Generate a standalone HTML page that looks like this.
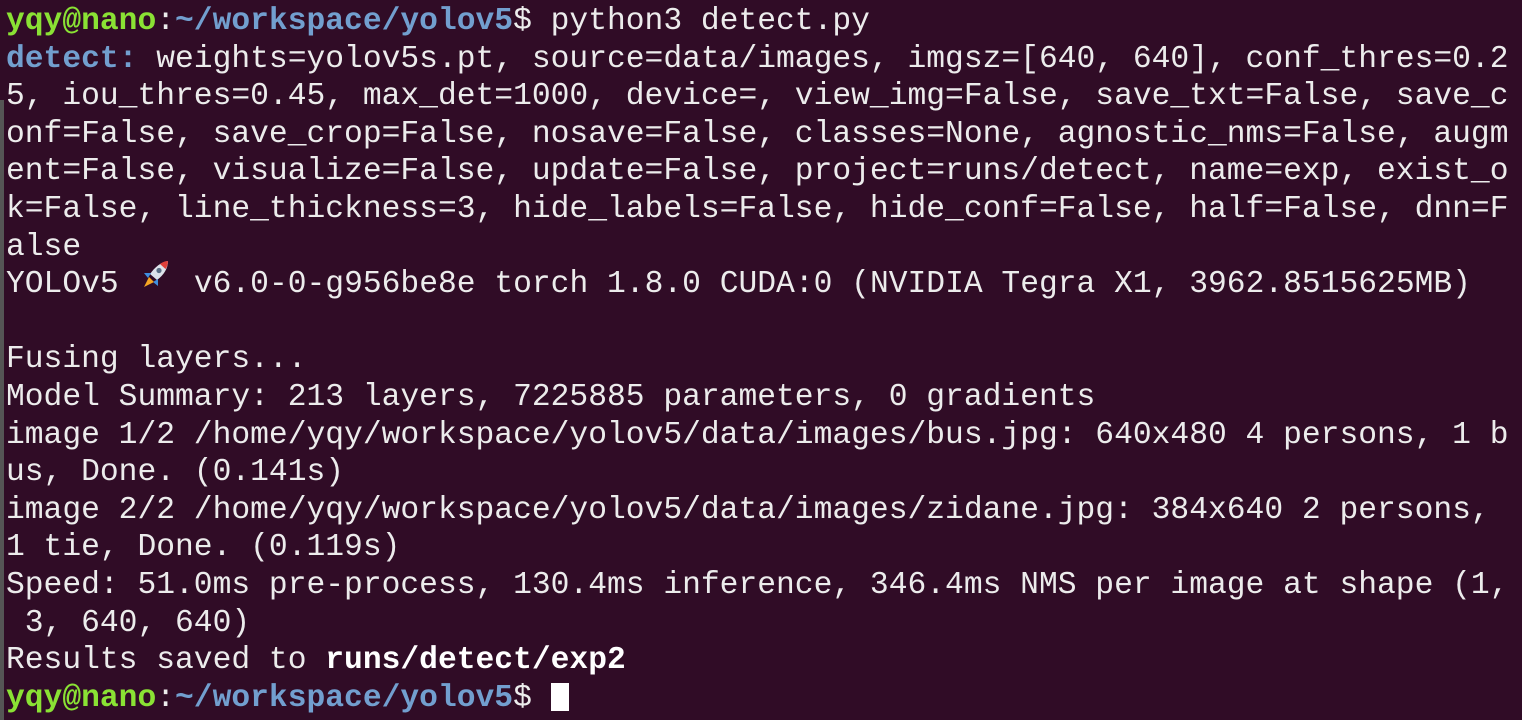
<!DOCTYPE html>
<html><head><meta charset="utf-8"><style>
html,body{margin:0;padding:0;width:1522px;height:720px;overflow:hidden;background:#300c26;}
pre{margin:0;padding:3px 0 0 6px;font-family:"Liberation Mono",monospace;font-size:31.3px;line-height:37.6px;color:#ececec;white-space:pre;}
.g{color:#8ae234;font-weight:bold}
.b{color:#729fcf;font-weight:bold}
.bb{font-weight:bold;color:#fff}
.cur{display:inline-block;width:18px;height:28px;background:#fff;vertical-align:-5px}
.rw{display:inline-block;position:relative;width:37.6px;height:10px;vertical-align:baseline}
.rw svg{position:absolute;left:0;top:-24px;width:38px;height:34px}
.edge{position:absolute;left:0;top:100px;width:4px;height:620px;background:#555}
</style></head><body>
<div class="edge"></div>
<pre><span class="g">yqy@nano</span>:<span class="b">~/workspace/yolov5</span>$ python3 detect.py
<span class="b">detect: </span>weights=yolov5s.pt, source=data/images, imgsz=[640, 640], conf_thres=0.2
5, iou_thres=0.45, max_det=1000, device=, view_img=False, save_txt=False, save_c
onf=False, save_crop=False, nosave=False, classes=None, agnostic_nms=False, augm
ent=False, visualize=False, update=False, project=runs/detect, name=exp, exist_o
k=False, line_thickness=3, hide_labels=False, hide_conf=False, half=False, dnn=F
alse
YOLOv5 <span class="rw"><svg viewBox="0 0 38 34"><path d="M31 3 C31 10 27 17 20 22 L13 16 C18 9 24 4 31 3Z" fill="#dde3ea"/><path d="M31 3 C31 6 30 9 28.5 11 L23 6 C25 4.5 28 3 31 3Z" fill="#e0403a"/><circle cx="22" cy="12.5" r="2.6" fill="#5a6f85"/><path d="M14 15 L7 15 L11 20Z M21 21 L21 28 L16 24Z" fill="#3f8fe0"/><path d="M12 19 L17 24 L7 29Z" fill="#f5a623"/></svg></span> v6.0-0-g956be8e torch 1.8.0 CUDA:0 (NVIDIA Tegra X1, 3962.8515625MB)

Fusing layers...
Model Summary: 213 layers, 7225885 parameters, 0 gradients
image 1/2 /home/yqy/workspace/yolov5/data/images/bus.jpg: 640x480 4 persons, 1 b
us, Done. (0.141s)
image 2/2 /home/yqy/workspace/yolov5/data/images/zidane.jpg: 384x640 2 persons,
1 tie, Done. (0.119s)
Speed: 51.0ms pre-process, 130.4ms inference, 346.4ms NMS per image at shape (1,
 3, 640, 640)
Results saved to <span class="bb">runs/detect/exp2</span>
<span class="g">yqy@nano</span>:<span class="b">~/workspace/yolov5</span>$ <span class="cur"></span></pre>
</body></html>
